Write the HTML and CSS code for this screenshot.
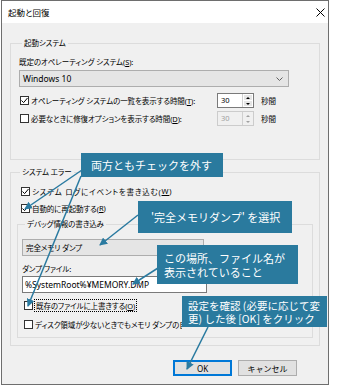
FILE: index.html
```html
<!DOCTYPE html>
<html lang="ja">
<head>
    <meta charset="UTF-8">
    <title>起動と回復</title>
    <link rel="stylesheet" href="styles.css">
</head>
<body>
    <div class="window">
        <div class="titlebar">
            <span class="title">起動と回復</span>
            <svg class="close" width="9" height="9" viewBox="0 0 9 9">
                <path d="M0.5 0.5 L8.5 8.5 M8.5 0.5 L0.5 8.5" stroke="#000" stroke-width="1"/>
            </svg>
        </div>

        <div class="client">
            <!-- 起動システム -->
            <div class="group group-start">
                <div class="group-title">起動システム</div>
                <div class="label os-label">既定のオペレーティング システム(<u>S</u>):</div>
                <div class="combo combo-os">
                    <span>Windows 10</span>
                    <svg width="7" height="4" viewBox="0 0 7 4"><path d="M0.5 0.5 L3.5 3.5 L6.5 0.5" fill="none" stroke="#606060"/></svg>
                </div>
                <div class="spin-row first">
                    <div class="check"><span class="box checked"><svg width="7" height="7" viewBox="0 0 7 7"><path d="M0.5 3.5 L2.6 5.6 L6.5 1" fill="none" stroke="#000"/></svg></span>オペレーティング システムの一覧を表示する時間(<u>T</u>):</div>
                    <div class="spin">
                        <span class="spin-val">30</span>
                        <span class="spin-btns"><i class="up"></i><i class="down"></i></span>
                    </div>
                    <span class="unit">秒間</span>
                </div>
                <div class="spin-row">
                    <div class="check"><span class="box"></span>必要なときに修復オプションを表示する時間(<u>D</u>):</div>
                    <div class="spin disabled">
                        <span class="spin-val">30</span>
                        <span class="spin-btns"><i class="up"></i><i class="down"></i></span>
                    </div>
                    <span class="unit">秒間</span>
                </div>
            </div>

            <!-- システム エラー -->
            <div class="group group-error">
                <div class="group-title">システム エラー</div>
                <div class="check row-log"><span class="box checked"><svg width="7" height="7" viewBox="0 0 7 7"><path d="M0.5 3.5 L2.6 5.6 L6.5 1" fill="none" stroke="#000"/></svg></span>システム ログにイベントを書き込む(<u>W</u>)</div>
                <div class="check row-restart"><span class="box checked"><svg width="7" height="7" viewBox="0 0 7 7"><path d="M0.5 3.5 L2.6 5.6 L6.5 1" fill="none" stroke="#000"/></svg></span>自動的に再起動する(<u>R</u>)</div>

                <div class="group group-debug">
                    <div class="group-title">デバッグ情報の書き込み</div>
                    <div class="combo combo-dump"><span>完全メモリ ダンプ</span></div>
                    <div class="label dump-label">ダンプ ファイル:</div>
                    <div class="textbox">%SystemRoot%¥MEMORY.DMP</div>
                    <div class="check row-overwrite"><span class="box"></span><span class="focus">既存のファイルに上書きする(<u>O</u>)</span></div>
                    <div class="check row-disk"><span class="box"></span>ディスク領域が少ないときでもメモリ ダンプの自動削除を無効にする(<u>A</u>)</div>
                </div>
            </div>

            <div class="buttons">
                <button class="btn default">OK</button>
                <button class="btn">キャンセル</button>
            </div>
        </div>
    </div>

    <!-- 説明の吹き出しと矢印 -->
    <svg class="arrows" width="343" height="386" viewBox="0 0 343 386">
        <defs>
            <marker id="head" markerUnits="userSpaceOnUse" markerWidth="8" markerHeight="8" refX="7" refY="4" orient="auto">
                <path d="M0 0 L8 4 L0 8 Z" fill="#2a7aa0"/>
            </marker>
        </defs>
        <g stroke="#2a7aa0" stroke-width="1.5" marker-end="url(#head)">
            <line x1="82" y1="170" x2="25" y2="209"/>
            <line x1="81" y1="176" x2="28" y2="306"/>
            <line x1="138" y1="215" x2="100" y2="245"/>
            <line x1="158" y1="268" x2="133" y2="284"/>
            <line x1="208" y1="327" x2="187" y2="369"/>
        </g>
    </svg>

    <div class="callout c1">両方ともチェックを外す</div>
    <div class="callout c2">'完全メモリダンプ' を選択</div>
    <div class="callout c3">この場所、ファイル名が<br>表示されていること</div>
    <div class="callout c4">設定を確認 (必要に応じて変<br>更) した後 [OK] をクリック</div>
</body>
</html>
```

FILE: styles.css
```css
* {
    box-sizing: border-box;
}
body {
    margin: 0;
    width: 343px;
    height: 386px;
    overflow: hidden;
    position: relative;
    background-color: #fff;
    font-family: "Noto Sans", "Noto Sans CJK JP", sans-serif;
    font-size: 7.5px;
    letter-spacing: -0.1px;
    color: #000;
    font-feature-settings: "palt";
}
u {
    text-decoration-thickness: 1px;
    text-underline-offset: 1px;
}
.window {
    margin-left: 1px;
    width: 328px;
    height: 385px;
    border: 1px solid #6e6e6e;
    background-color: #f0f0f0;
    display: flex;
    flex-direction: column;
}
.titlebar {
    height: 22px;
    flex-shrink: 0;
    background-color: #fff;
    display: flex;
    align-items: center;
    justify-content: space-between;
    padding: 0 3px 0 6px;
    font-size: 8.5px;
    letter-spacing: 0;
}
.client {
    flex: 1;
    padding: 20px 8px 0 8px;
}
.group {
    border: 1px solid #dcdcdc;
}
.group-title {
    width: fit-content;
    height: 12px;
    line-height: 12px;
    margin: -7px 0 0 3px;
    padding: 0 2px;
    background-color: #f0f0f0;
}
.group-start {
    padding: 0 8px 33px 8px;
}
.label {
    height: 12px;
    line-height: 12px;
}
.os-label {
    margin-top: 7px;
}
.combo {
    height: 17px;
    border: 1px solid #adadad;
    background-color: #e5e5e5;
    display: flex;
    align-items: center;
    justify-content: space-between;
    padding: 0 5px 0 3px;
}
.combo-os {
    width: 270px;
    margin-top: 2px;
    font-size: 8.5px;
    letter-spacing: 0;
}
.spin-row {
    display: grid;
    grid-template-columns: 191px 37px auto;
    column-gap: 7px;
    align-items: center;
    height: 15px;
    margin-top: 3px;
}
.spin-row.first {
    margin-top: 6px;
}
.check {
    display: flex;
    align-items: center;
    height: 12px;
    white-space: nowrap;
}
.box {
    width: 9px;
    height: 9px;
    flex-shrink: 0;
    margin: 0 2px 0 1px;
    border: 1px solid #333;
    background-color: #fff;
    display: flex;
    align-items: center;
    justify-content: center;
}
.spin {
    height: 15px;
    display: flex;
    border: 1px solid #7a7a7a;
    background-color: #fff;
}
.spin-val {
    flex: 1;
    padding-left: 3px;
    line-height: 13px;
}
.spin-btns {
    width: 11px;
    display: flex;
    flex-direction: column;
    gap: 1px;
    padding: 1px;
    border-left: 1px solid #d0d0d0;
}
.spin-btns i {
    flex: 1;
    display: flex;
    align-items: center;
    justify-content: center;
    background-color: #e6e6e6;
}
.spin-btns .up::before {
    content: "";
    border-left: 2px solid transparent;
    border-right: 2px solid transparent;
    border-bottom: 2px solid #000;
}
.spin-btns .down::before {
    content: "";
    border-left: 2px solid transparent;
    border-right: 2px solid transparent;
    border-top: 2px solid #000;
}
.spin.disabled {
    border-color: #cccccc;
    background-color: #f0f0f0;
    color: #a0a0a0;
}
.spin.disabled .spin-btns i {
    background-color: #f0f0f0;
}
.spin.disabled .up::before {
    border-bottom-color: #a0a0a0;
}
.spin.disabled .down::before {
    border-top-color: #a0a0a0;
}
.group-error {
    margin-top: 12px;
    padding: 0 6px 7px 6px;
}
.row-log {
    margin: 7px 0 0 3px;
    letter-spacing: 0.8px;
}
.row-restart {
    margin: 5px 0 0 3px;
}
.group-debug {
    margin-top: 10px;
    padding: 0 4px 7px 4px;
}
.combo-dump {
    width: 182px;
    margin-top: 9px;
}
.dump-label {
    margin-top: 7px;
}
.textbox {
    width: 185px;
    height: 17px;
    margin-top: 1px;
    border: 1px solid #7a7a7a;
    background-color: #fff;
    padding-left: 2px;
    line-height: 15px;
    font-size: 8.5px;
    letter-spacing: 0;
}
.row-overwrite {
    margin: 6px 0 0 1px;
}
.row-disk {
    margin: 7px 0 0 1px;
    /* 右側は吹き出しの下に隠れる */
    width: 159px;
    overflow: hidden;
}
.focus {
    outline: 1px dotted #000;
    padding: 0 1px;
}
.buttons {
    display: flex;
    justify-content: flex-end;
    gap: 6px;
    margin-top: 14px;
    padding-right: 23px;
}
.btn {
    height: 16px;
    width: 59px;
    padding: 0;
    font-family: inherit;
    font-size: 8px;
    background-color: #e1e1e1;
    border: 1px solid #adadad;
    color: #000;
}
.btn.default {
    border: 2px solid #0078d7;
}
.arrows {
    position: absolute;
    left: 0;
    top: 0;
}
.callout {
    position: absolute;
    background-color: #2a7a9e;
    color: #fff;
    font-family: "Noto Sans CJK JP", sans-serif;
    font-size: 11px;
    letter-spacing: 0;
    font-feature-settings: normal;
    white-space: nowrap;
    display: flex;
    align-items: center;
}
.c1 {
    left: 81px;
    top: 153px;
    width: 142px;
    height: 24px;
    padding-left: 10px;
}
.c2 {
    left: 138px;
    top: 201px;
    width: 154px;
    height: 32px;
    padding-left: 13px;
}
.c3 {
    left: 157px;
    top: 245px;
    width: 141px;
    height: 39px;
    padding-left: 7px;
    line-height: 14px;
}
.c4 {
    left: 182px;
    top: 296px;
    width: 145px;
    height: 31px;
    padding-left: 6px;
    font-size: 10.5px;
    line-height: 13px;
}
```
